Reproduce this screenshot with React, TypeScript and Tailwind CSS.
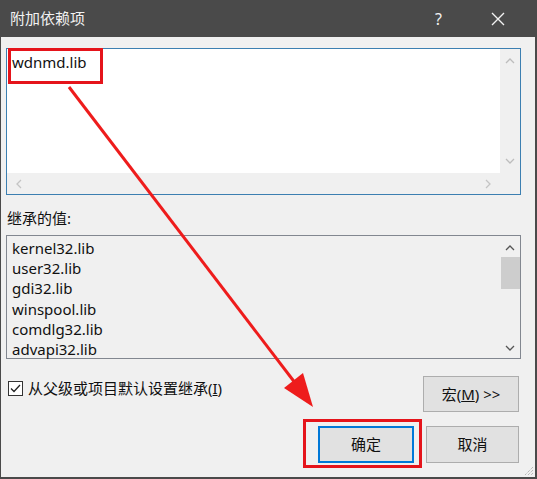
const inherited = [
  "kernel32.lib",
  "user32.lib",
  "gdi32.lib",
  "winspool.lib",
  "comdlg32.lib",
  "advapi32.lib",
];

function Chevron({ dir, color }: { dir: "up" | "down" | "left" | "right"; color: string }) {
  const d = {
    up: "M1 6 L5 2 L9 6",
    down: "M1 2 L5 6 L9 2",
    left: "M6 1 L2 5 L6 9",
    right: "M2 1 L6 5 L2 9",
  }[dir];
  const w = dir === "up" || dir === "down" ? 10 : 8;
  const h = dir === "up" || dir === "down" ? 8 : 10;
  return (
    <svg width={w} height={h} viewBox={`0 0 ${w} ${h}`}>
      <path d={d} fill="none" stroke={color} strokeWidth="1.3" />
    </svg>
  );
}

function Overlay() {
  return (
    <svg className="absolute inset-0 pointer-events-none" width="537" height="479">
      <rect x="8.5" y="49.5" width="92" height="33" fill="none" stroke="#e5141b" strokeWidth="3" />
      <rect x="303.5" y="420.5" width="116" height="46" fill="none" stroke="#e5141b" strokeWidth="3" />
      <line x1="68" y1="87" x2="298" y2="388" stroke="#ee1c1c" strokeWidth="3" />
      <polygon points="312,407 283,388 302,373" fill="#ee1c1c" />
    </svg>
  );
}

export default function App() {
  return (
    <div className="relative w-[537px] h-[479px] bg-[#f0f0f0] border-l border-r-2 border-b-2 border-[#4a4a4a] font-['Noto_Sans','Noto_Sans_CJK_SC',sans-serif] text-[#111] overflow-hidden">
      <div className="h-[37px] bg-[#4a4a4a] flex items-center pl-[9px] text-[#f2f2f2]">
        <span className="text-[15px]">附加依赖项</span>
        <span className="ml-auto text-[16px] mr-[49px]">?</span>
        <svg width="14" height="14" viewBox="0 0 14 14" className="mr-[30px]">
          <path d="M1 1 L13 13 M13 1 L1 13" stroke="#f2f2f2" strokeWidth="1.4" />
        </svg>
      </div>

      <div className="pl-[5px] pt-[11px]">
        <div className="w-[515px] h-[147px] border border-[#3c7fb1] grid grid-cols-[1fr_20px] grid-rows-[1fr_21px]">
          <div className="bg-white pl-[5px] pt-[2px] text-[15px] leading-[22px]">wdnmd.lib</div>
          <div className="bg-[#f0f0f0] flex flex-col items-center justify-between py-[8px]">
            <Chevron dir="up" color="#bdbdbd" />
            <Chevron dir="down" color="#bdbdbd" />
          </div>
          <div className="bg-[#f0f0f0] flex items-center justify-between px-[8px]">
            <Chevron dir="left" color="#c4c4c4" />
            <Chevron dir="right" color="#c4c4c4" />
          </div>
          <div className="bg-[#f0f0f0]" />
        </div>

        <div className="pl-[1px] pt-[12px] text-[15px] leading-[22px]">继承的值:</div>

        <div className="mt-[6px] w-[515px] h-[124px] border border-[#828790] bg-[#f0f0f0] flex">
          <div className="flex-1 pl-[5px] pt-[2px] text-[15px] leading-[20.2px]">
            {inherited.map((l) => (
              <div key={l}>{l}</div>
            ))}
          </div>
          <div className="w-[20px] flex flex-col items-center pt-[8px] pb-[6px]">
            <Chevron dir="up" color="#555" />
            <div className="mt-[5px] w-[19px] h-[32px] bg-[#cdcdcd]" />
            <div className="mt-auto">
              <Chevron dir="down" color="#555" />
            </div>
          </div>
        </div>

        <div className="flex mt-[17px]">
          <label className="flex items-center h-[20px] mt-[2px] ml-[2px] gap-[5px] text-[15px]">
            <span className="w-[15px] h-[15px] border border-[#333] bg-white flex items-center justify-center">
              <svg width="11" height="9" viewBox="0 0 11 9">
                <path d="M1 4.5 L4 7.5 L10 1" fill="none" stroke="#222" strokeWidth="1.3" />
              </svg>
            </span>
            <span>
              从父级或项目默认设置继承(<span className="underline">I</span>)
            </span>
          </label>
          <div className="ml-auto mr-[16px] flex flex-col items-end gap-[14px]">
            <button className="w-[96px] h-[36px] bg-[#e1e1e1] border border-[#adadad] text-[15px]">
              宏(<span className="underline">M</span>) &gt;&gt;
            </button>
            <div className="flex gap-[12px]">
              <button className="w-[96px] h-[37px] bg-[#e1e1e1] border-2 border-[#0078d7] text-[15px]">确定</button>
              <button className="w-[93px] h-[37px] bg-[#e1e1e1] border border-[#adadad] text-[15px]">取消</button>
            </div>
          </div>
        </div>
      </div>

      <svg className="absolute right-[1px] bottom-[1px]" width="12" height="12" viewBox="0 0 12 12">
        <path d="M11 3 L3 11 M11 6 L6 11 M11 9 L9 11" stroke="#a0a0a0" strokeWidth="1" strokeDasharray="1 1" />
      </svg>

      <Overlay />
    </div>
  );
}
